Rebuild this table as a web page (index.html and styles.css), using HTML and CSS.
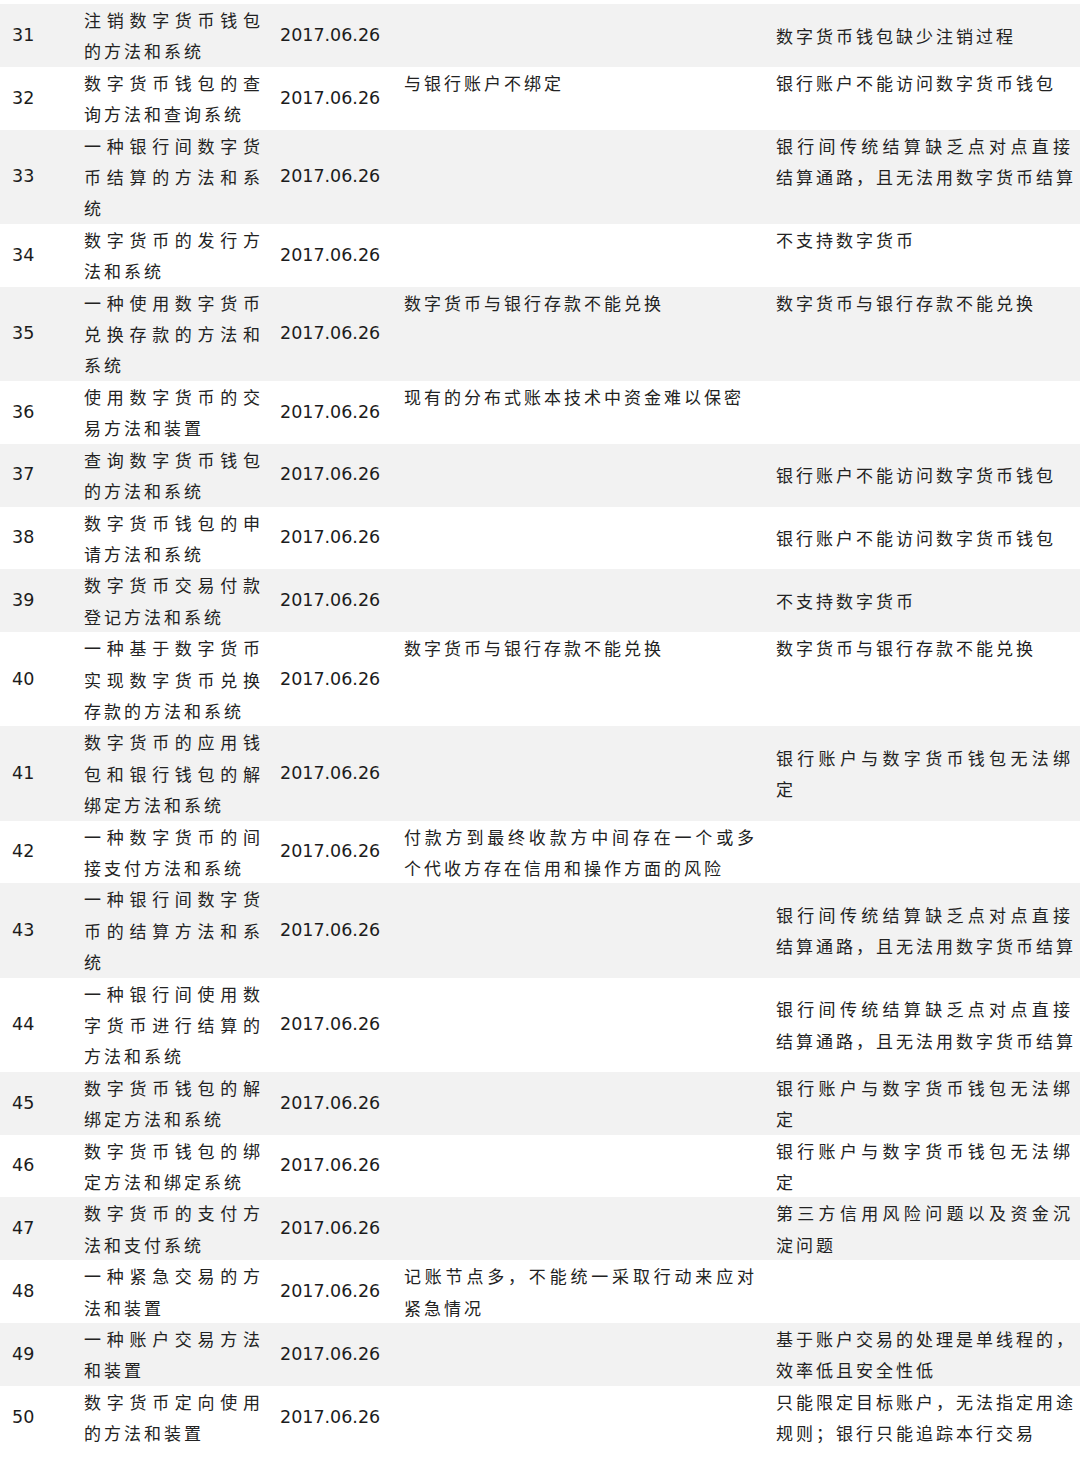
FILE: index.html
```html
<!DOCTYPE html>
<html lang="zh-CN">
<head>
<meta charset="utf-8">
<title>数字货币专利</title>
<link rel="stylesheet" href="styles.css">
</head>
<body>
<div class="table">
  <div class="row alt">
    <div class="c no">31</div>
    <div class="c ttl"><span class="ln">注销数字货币钱包</span><span class="ln">的方法和系统</span></div>
    <div class="c dt">2017.06.26</div>
    <div class="c d4"></div>
    <div class="c d5 mid"><span class="ln">数字货币钱包缺少注销过程</span></div>
  </div>
  <div class="row">
    <div class="c no">32</div>
    <div class="c ttl"><span class="ln">数字货币钱包的查</span><span class="ln">询方法和查询系统</span></div>
    <div class="c dt">2017.06.26</div>
    <div class="c d4"><span class="ln">与银行账户不绑定</span></div>
    <div class="c d5"><span class="ln">银行账户不能访问数字货币钱包</span></div>
  </div>
  <div class="row alt">
    <div class="c no">33</div>
    <div class="c ttl"><span class="ln">一种银行间数字货</span><span class="ln">币结算的方法和系</span><span class="ln">统</span></div>
    <div class="c dt">2017.06.26</div>
    <div class="c d4"></div>
    <div class="c d5"><span class="ln">银行间传统结算缺乏点对点直接</span><span class="ln">结算通路，且无法用数字货币结算</span></div>
  </div>
  <div class="row">
    <div class="c no">34</div>
    <div class="c ttl"><span class="ln">数字货币的发行方</span><span class="ln">法和系统</span></div>
    <div class="c dt">2017.06.26</div>
    <div class="c d4"></div>
    <div class="c d5"><span class="ln">不支持数字货币</span></div>
  </div>
  <div class="row alt">
    <div class="c no">35</div>
    <div class="c ttl"><span class="ln">一种使用数字货币</span><span class="ln">兑换存款的方法和</span><span class="ln">系统</span></div>
    <div class="c dt">2017.06.26</div>
    <div class="c d4"><span class="ln">数字货币与银行存款不能兑换</span></div>
    <div class="c d5"><span class="ln">数字货币与银行存款不能兑换</span></div>
  </div>
  <div class="row">
    <div class="c no">36</div>
    <div class="c ttl"><span class="ln">使用数字货币的交</span><span class="ln">易方法和装置</span></div>
    <div class="c dt">2017.06.26</div>
    <div class="c d4"><span class="ln">现有的分布式账本技术中资金难以保密</span></div>
    <div class="c d5"></div>
  </div>
  <div class="row alt">
    <div class="c no">37</div>
    <div class="c ttl"><span class="ln">查询数字货币钱包</span><span class="ln">的方法和系统</span></div>
    <div class="c dt">2017.06.26</div>
    <div class="c d4"></div>
    <div class="c d5 mid"><span class="ln">银行账户不能访问数字货币钱包</span></div>
  </div>
  <div class="row">
    <div class="c no">38</div>
    <div class="c ttl"><span class="ln">数字货币钱包的申</span><span class="ln">请方法和系统</span></div>
    <div class="c dt">2017.06.26</div>
    <div class="c d4"></div>
    <div class="c d5 mid"><span class="ln">银行账户不能访问数字货币钱包</span></div>
  </div>
  <div class="row alt">
    <div class="c no">39</div>
    <div class="c ttl"><span class="ln">数字货币交易付款</span><span class="ln">登记方法和系统</span></div>
    <div class="c dt">2017.06.26</div>
    <div class="c d4"></div>
    <div class="c d5 mid"><span class="ln">不支持数字货币</span></div>
  </div>
  <div class="row">
    <div class="c no">40</div>
    <div class="c ttl"><span class="ln">一种基于数字货币</span><span class="ln">实现数字货币兑换</span><span class="ln">存款的方法和系统</span></div>
    <div class="c dt">2017.06.26</div>
    <div class="c d4"><span class="ln">数字货币与银行存款不能兑换</span></div>
    <div class="c d5"><span class="ln">数字货币与银行存款不能兑换</span></div>
  </div>
  <div class="row alt">
    <div class="c no">41</div>
    <div class="c ttl"><span class="ln">数字货币的应用钱</span><span class="ln">包和银行钱包的解</span><span class="ln">绑定方法和系统</span></div>
    <div class="c dt">2017.06.26</div>
    <div class="c d4"></div>
    <div class="c d5 mid"><span class="ln">银行账户与数字货币钱包无法绑</span><span class="ln">定</span></div>
  </div>
  <div class="row">
    <div class="c no">42</div>
    <div class="c ttl"><span class="ln">一种数字货币的间</span><span class="ln">接支付方法和系统</span></div>
    <div class="c dt">2017.06.26</div>
    <div class="c d4"><span class="ln">付款方到最终收款方中间存在一个或多</span><span class="ln">个代收方存在信用和操作方面的风险</span></div>
    <div class="c d5"></div>
  </div>
  <div class="row alt">
    <div class="c no">43</div>
    <div class="c ttl"><span class="ln">一种银行间数字货</span><span class="ln">币的结算方法和系</span><span class="ln">统</span></div>
    <div class="c dt">2017.06.26</div>
    <div class="c d4"></div>
    <div class="c d5 mid"><span class="ln">银行间传统结算缺乏点对点直接</span><span class="ln">结算通路，且无法用数字货币结算</span></div>
  </div>
  <div class="row">
    <div class="c no">44</div>
    <div class="c ttl"><span class="ln">一种银行间使用数</span><span class="ln">字货币进行结算的</span><span class="ln">方法和系统</span></div>
    <div class="c dt">2017.06.26</div>
    <div class="c d4"></div>
    <div class="c d5 mid"><span class="ln">银行间传统结算缺乏点对点直接</span><span class="ln">结算通路，且无法用数字货币结算</span></div>
  </div>
  <div class="row alt">
    <div class="c no">45</div>
    <div class="c ttl"><span class="ln">数字货币钱包的解</span><span class="ln">绑定方法和系统</span></div>
    <div class="c dt">2017.06.26</div>
    <div class="c d4"></div>
    <div class="c d5"><span class="ln">银行账户与数字货币钱包无法绑</span><span class="ln">定</span></div>
  </div>
  <div class="row">
    <div class="c no">46</div>
    <div class="c ttl"><span class="ln">数字货币钱包的绑</span><span class="ln">定方法和绑定系统</span></div>
    <div class="c dt">2017.06.26</div>
    <div class="c d4"></div>
    <div class="c d5"><span class="ln">银行账户与数字货币钱包无法绑</span><span class="ln">定</span></div>
  </div>
  <div class="row alt">
    <div class="c no">47</div>
    <div class="c ttl"><span class="ln">数字货币的支付方</span><span class="ln">法和支付系统</span></div>
    <div class="c dt">2017.06.26</div>
    <div class="c d4"></div>
    <div class="c d5"><span class="ln">第三方信用风险问题以及资金沉</span><span class="ln">淀问题</span></div>
  </div>
  <div class="row">
    <div class="c no">48</div>
    <div class="c ttl"><span class="ln">一种紧急交易的方</span><span class="ln">法和装置</span></div>
    <div class="c dt">2017.06.26</div>
    <div class="c d4"><span class="ln">记账节点多，不能统一采取行动来应对</span><span class="ln">紧急情况</span></div>
    <div class="c d5"></div>
  </div>
  <div class="row alt">
    <div class="c no">49</div>
    <div class="c ttl"><span class="ln">一种账户交易方法</span><span class="ln">和装置</span></div>
    <div class="c dt">2017.06.26</div>
    <div class="c d4"></div>
    <div class="c d5"><span class="ln">基于账户交易的处理是单线程的，</span><span class="ln">效率低且安全性低</span></div>
  </div>
  <div class="row">
    <div class="c no">50</div>
    <div class="c ttl"><span class="ln">数字货币定向使用</span><span class="ln">的方法和装置</span></div>
    <div class="c dt">2017.06.26</div>
    <div class="c d4"></div>
    <div class="c d5"><span class="ln">只能限定目标账户，无法指定用途</span><span class="ln">规则；银行只能追踪本行交易</span></div>
  </div>
</div>
</body>
</html>
```
FILE: styles.css
```css
html, body {
  margin: 0;
  padding: 0;
  background: #ffffff;
}

body {
  color: #222222;
  font-family: "Noto Sans CJK SC", "DejaVu Sans", sans-serif;
}

.table {
  padding-top: 4px;
  padding-bottom: 10px;
}

.row {
  display: grid;
  grid-template-columns: 84px 196px 124px 372px 304px;
  background: #ffffff;
}

.row.alt {
  background: #f2f2f2;
}

.c {
  font-size: 17px;
  line-height: 31.4px;
  letter-spacing: 3px;
  align-self: start;
}

.no,
.dt {
  align-self: center;
  font-family: "DejaVu Sans", "Noto Sans", sans-serif;
  font-size: 17.5px;
  letter-spacing: 0;
  color: #1c1c1c;
}

.no {
  padding-left: 12px;
}

.ttl {
  width: 176px;
}

.d4 {
  width: 350px;
}

.d5 {
  width: 294px;
}

.mid {
  align-self: center;
}

.ln {
  display: block;
  white-space: nowrap;
}

.ln:not(:last-child) {
  text-align-last: justify;
  margin-right: -3px;
}
```
